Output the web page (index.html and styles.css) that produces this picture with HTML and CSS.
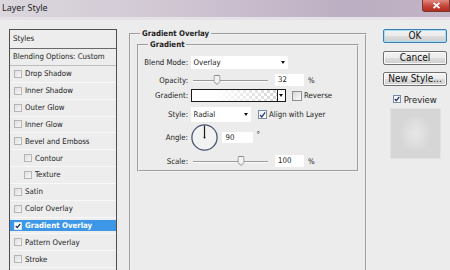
FILE: index.html
```html
<!DOCTYPE html>
<html lang="en">
<head>
    <meta charset="UTF-8">
    <title>Layer Style</title>
    <link rel="stylesheet" href="styles.css">
</head>
<body>
    <div class="titlebar">
        <span class="title">Layer Style</span>
        <span class="close">
            <svg width="9" height="7" viewBox="0 0 9 7"><path d="M1.5 0.8 L7.5 6.2 M7.5 0.8 L1.5 6.2" stroke="#fff" stroke-width="1.8" fill="none"/></svg>
        </span>
    </div>

    <div class="dialog">
        <div class="styles-list">
            <div class="list-head">Styles</div>
            <div class="list-blend">Blending Options: Custom</div>
            <div class="item"><span class="cb"></span>Drop Shadow</div>
            <div class="item"><span class="cb"></span>Inner Shadow</div>
            <div class="item"><span class="cb"></span>Outer Glow</div>
            <div class="item"><span class="cb"></span>Inner Glow</div>
            <div class="item"><span class="cb"></span>Bevel and Emboss</div>
            <div class="item sub"><span class="cb"></span>Contour</div>
            <div class="item sub"><span class="cb"></span>Texture</div>
            <div class="item"><span class="cb"></span>Satin</div>
            <div class="item"><span class="cb"></span>Color Overlay</div>
            <div class="item selected">
                <span class="cb on">
                    <svg width="6" height="6" viewBox="0 0 6 6"><path d="M0.8 3 L2.3 4.6 L5.2 0.8" stroke="#1b2a4a" stroke-width="1.3" fill="none"/></svg>
                </span>Gradient Overlay
            </div>
            <div class="item"><span class="cb"></span>Pattern Overlay</div>
            <div class="item"><span class="cb"></span>Stroke</div>
        </div>

        <fieldset class="panel">
            <legend>Gradient Overlay</legend>
            <fieldset class="group">
                <legend>Gradient</legend>

                <div class="row r-blend">
                    <span class="lbl">Blend Mode:</span>
                    <div class="select blend-mode">Overlay<i class="arrow"></i></div>
                </div>

                <div class="row r-opacity">
                    <span class="lbl">Opacity:</span>
                    <div class="slider">
                        <span class="thumb" style="left: 32%">
                            <svg width="7" height="10" viewBox="0 0 7 10"><path d="M0.5 1.5 Q0.5 0.5 1.5 0.5 H5.5 Q6.5 0.5 6.5 1.5 V6.5 L3.5 9.5 L0.5 6.5 Z" fill="#f3f3f3" stroke="#8a8a8a"/></svg>
                        </span>
                    </div>
                    <span class="num">32</span>
                    <span class="unit">%</span>
                </div>

                <div class="row r-gradient">
                    <span class="lbl">Gradient:</span>
                    <div class="grad"><span class="grad-fill"></span></div>
                    <div class="grad-btn"><i class="arrow"></i></div>
                    <span class="chk reverse"></span>
                    <span class="chk-text">Reverse</span>
                </div>

                <div class="row r-style">
                    <span class="lbl">Style:</span>
                    <div class="select style-mode">Radial<i class="arrow"></i></div>
                    <span class="chk align on">
                        <svg width="8" height="8" viewBox="0 0 8 8"><path d="M1.2 4 L3.2 6.2 L7 1" stroke="#233a6c" stroke-width="1.4" fill="none"/></svg>
                    </span>
                    <span class="chk-text">Align with Layer</span>
                </div>

                <div class="row r-angle">
                    <span class="lbl">Angle:</span>
                    <svg class="dial" width="27" height="27" viewBox="0 0 27 27">
                        <circle cx="13.5" cy="13.5" r="12.6" fill="#f2f2f2" stroke="#4b5674" stroke-width="1.3"/>
                        <path d="M13.5 13.5 V1.5" stroke="#1d1d1d" stroke-width="1.2"/>
                        <circle cx="13.5" cy="13.5" r="1" fill="#1d1d1d"/>
                    </svg>
                    <span class="num angle">90</span>
                    <span class="unit deg">°</span>
                </div>

                <div class="row r-scale">
                    <span class="lbl">Scale:</span>
                    <div class="slider">
                        <span class="thumb" style="left: 64%">
                            <svg width="7" height="10" viewBox="0 0 7 10"><path d="M0.5 1.5 Q0.5 0.5 1.5 0.5 H5.5 Q6.5 0.5 6.5 1.5 V6.5 L3.5 9.5 L0.5 6.5 Z" fill="#f3f3f3" stroke="#8a8a8a"/></svg>
                        </span>
                    </div>
                    <span class="num">100</span>
                    <span class="unit">%</span>
                </div>
            </fieldset>
        </fieldset>

        <div class="actions">
            <button class="btn default">OK</button>
            <button class="btn">Cancel</button>
            <button class="btn">New Style...</button>
            <div class="preview-toggle">
                <span class="chk small on">
                    <svg width="6" height="6" viewBox="0 0 6 6"><path d="M0.8 3 L2.3 4.7 L5.3 0.8" stroke="#233a6c" stroke-width="1.3" fill="none"/></svg>
                </span>
                <span>Preview</span>
            </div>
            <div class="swatch"></div>
        </div>
    </div>
</body>
</html>
```

FILE: styles.css
```css
/* Photoshop "Layer Style" dialog, Windows 7 frame */
:root {
    --face: #ececec;
    --text: #1c1c1c;
    --select: #3d97e6;
}

* {
    box-sizing: border-box;
}

body {
    margin: 0;
    width: 450px;
    height: 270px;
    overflow: hidden;
    background: var(--face);
    color: var(--text);
    font-family: "DejaVu Sans Condensed", "DejaVu Sans", sans-serif;
    font-size: 7.8px;
}

/* title bar */
.titlebar {
    height: 20px;
    display: flex;
    justify-content: space-between;
    align-items: flex-start;
    border-bottom: 3px solid #e5e1e7;
    background: linear-gradient(90deg, #dbd7dd 0%, #d3cbd6 30%, #c8bccc 55%, #bcaec2 78%, #c3b5c6 100%);
}

.title {
    padding-left: 2px;
    line-height: 15px;
    font-family: "Noto Sans", sans-serif;
    font-size: 9px;
    color: #1e1e1e;
}

.close {
    width: 28px;
    height: 12px;
    display: flex;
    align-items: center;
    justify-content: center;
    border: 1px solid #7a3530;
    border-top: none;
    border-radius: 0 0 0 3px;
    background: linear-gradient(#e08a80, #c94a3e 50%, #b22a1f);
}

.dialog {
    display: flex;
    align-items: flex-start;
    height: 250px;
    padding: 9px 3px 0 9px;
    overflow: hidden;
}

/* left list */
.styles-list {
    flex: none;
    width: 108px;
    height: 250px;
    border: 1px solid #4e4e4e;
    border-bottom: none;
    background: #ededed;
}

.list-head {
    height: 19px;
    line-height: 17px;
    padding-left: 3px;
    border-bottom: 1px solid #6a6a6a;
}

.list-blend {
    height: 17px;
    line-height: 16px;
    padding-left: 3px;
    border-bottom: 1px solid #bdbdbd;
}

.item {
    display: flex;
    align-items: center;
    height: 16.85px;
    padding-left: 4px;
    border-bottom: 1px solid #f8f8f8;
}

.item.sub {
    padding-left: 14px;
}

.cb {
    flex: none;
    width: 8px;
    height: 8px;
    margin-right: 3px;
    border: 1px solid #b6b6b6;
    background: linear-gradient(135deg, #dedede, #f8f8f8);
}

.cb.on {
    display: flex;
    align-items: center;
    justify-content: center;
    border-color: #d5e4f5;
    background: #fff;
}

.item.selected {
    color: #fff;
    font-weight: bold;
    background: var(--select);
    box-shadow: inset 0 2px 0 #ededed, inset 0 -2px 0 #ededed;
}

/* group boxes */
.panel {
    flex: none;
    width: 238px;
    height: 250px;
    min-width: 0;
    margin: 0 0 0 12px;
    padding: 1px 6px 0 6px;
    border: 2px groove #f2f2f2;
}

.panel > legend,
.group > legend {
    margin-left: 3px;
    padding: 0 2px;
    line-height: 10px;
    font-weight: bold;
}

.group {
    min-width: 0;
    margin: 0;
    padding: 6px 5px 3px 5px;
    border: 2px groove #f2f2f2;
}

.group > legend {
    margin-left: 4px;
}

.row {
    display: flex;
    align-items: center;
}

.lbl {
    flex: none;
    width: 44px;
    margin-right: 2.5px;
    text-align: right;
    white-space: nowrap;
}

.r-blend { height: 13px; }
.r-opacity { height: 12px; margin-top: 5px; }
.r-gradient { height: 13px; margin-top: 3px; }
.r-style { height: 15px; margin-top: 5px; }
.r-angle { height: 27px; margin-top: 2px; }
.r-scale { height: 12px; margin-top: 4px; }

.select {
    display: flex;
    align-items: center;
    justify-content: space-between;
    height: 100%;
    padding: 0 2.5px 0 3px;
    background: #fff;
}

.blend-mode { width: 97px; }
.style-mode { width: 60px; }

.arrow {
    width: 0;
    height: 0;
    border-left: 2.5px solid transparent;
    border-right: 2.5px solid transparent;
    border-top: 3px solid #111;
}

.slider {
    position: relative;
    flex: none;
    width: 75px;
    height: 100%;
    margin-left: 2.5px;
}

.slider::before {
    content: "";
    position: absolute;
    left: 0;
    right: 0;
    top: 50%;
    border-top: 1px solid #9a9a9a;
    border-bottom: 1px solid #fafafa;
}

.thumb {
    position: absolute;
    top: 1px;
    transform: translateX(-50%);
    line-height: 0;
}

.num {
    flex: none;
    width: 29px;
    height: 12px;
    margin-left: 7px;
    padding-left: 3px;
    line-height: 12px;
    background: #fff;
}

.num.angle {
    width: 31px;
    height: 11px;
    margin-left: 4px;
    padding-left: 4px;
    line-height: 11px;
}

.unit {
    margin-left: 4px;
}

.deg {
    margin-left: 4px;
    align-self: flex-start;
    margin-top: 7px;
    line-height: 8px;
}

/* gradient picker */
.grad {
    display: flex;
    width: 87px;
    height: 100%;
    border: 1px solid #1a1a1a;
}

.grad-fill {
    flex: 1;
    background:
        linear-gradient(90deg, #fff 25%, rgba(255, 255, 255, 0) 100%),
        repeating-conic-gradient(#d6d6d6 0 25%, #fff 0 50%) 0 0 / 6px 6px;
}

.grad-btn {
    display: flex;
    align-items: center;
    justify-content: center;
    width: 8px;
    height: 100%;
    border: 1px solid #1a1a1a;
    border-left: none;
    background: #fff;
}

.grad-btn .arrow {
    border-left-width: 2px;
    border-right-width: 2px;
}

.chk {
    flex: none;
    display: flex;
    align-items: center;
    justify-content: center;
    width: 10px;
    height: 10px;
    border: 1px solid #8e8f8f;
    background: linear-gradient(135deg, #d8d8d8, #fbfbfb);
}

.chk.on {
    background: linear-gradient(135deg, #eef3fa, #ffffff);
    border-color: #7d8ba3;
}

.chk.reverse { margin-left: 6.5px; }
.chk.align { margin-left: 7.5px; width: 9px; height: 9px; }

.chk-text {
    margin-left: 2px;
    white-space: nowrap;
}

.dial {
    flex: none;
    display: block;
}

/* right column */
.actions {
    flex: none;
    width: 64px;
    margin-left: 16px;
    display: flex;
    flex-direction: column;
    align-items: center;
}

.btn {
    width: 64px;
    height: 14px;
    padding: 0;
    margin: 0;
    border: 1px solid #707070;
    border-radius: 2px;
    font-family: "DejaVu Sans Condensed", "DejaVu Sans", sans-serif;
    font-size: 10px;
    line-height: 12px;
    color: #111;
    background: linear-gradient(#f3f3f3 0%, #ebebeb 50%, #dddddd 51%, #cfcfcf 100%);
    box-shadow: inset 0 0 0 1px #fbfbfb;
}

.btn + .btn {
    margin-top: 8px;
}

.btn + .btn + .btn {
    margin-top: 7px;
}

.btn.default {
    border-color: #3c7fb1;
    box-shadow: inset 0 0 0 1px #a6dcf6;
}

.preview-toggle {
    display: flex;
    align-items: center;
    height: 12px;
    margin-top: 7px;
    font-size: 9.5px;
}

.chk.small {
    width: 8px;
    height: 8px;
    margin-right: 2.5px;
}

.swatch {
    width: 51px;
    height: 51px;
    margin-top: 3px;
    border: 1px solid #e2e2e2;
    background: radial-gradient(ellipse 16px 19px at 50% 50%, #e6e6e6 0%, #e0e0e0 45%, #d6d6d6 100%);
}
```
